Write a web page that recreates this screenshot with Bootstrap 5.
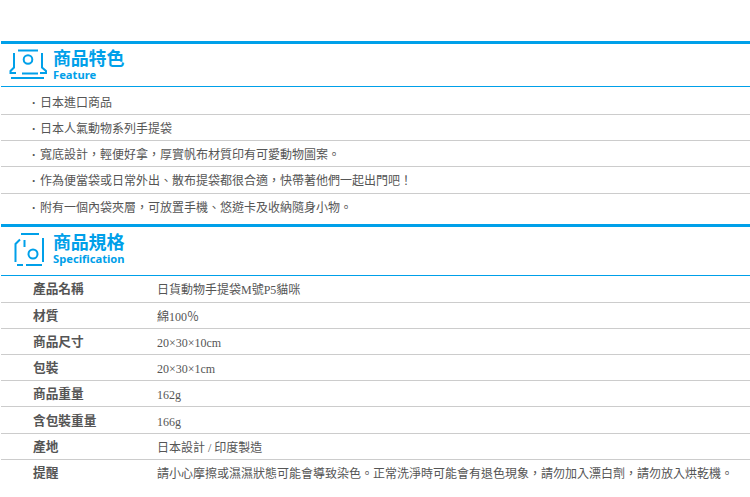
<!DOCTYPE html>
<html lang="zh-Hant">
<head>
<meta charset="utf-8">
<title>商品特色</title>
<link href="https://cdn.jsdelivr.net/npm/bootstrap@5.3.0/dist/css/bootstrap.min.css" rel="stylesheet">
<style>
body{background:#fff;font-family:"Liberation Serif","Noto Sans CJK TC",serif;font-size:12px;color:#555;padding:41px 0 0 1px;overflow:hidden}
.sec-head{border-top:3px solid #00a0e9;border-bottom:1px solid #00a0e9;color:#00a0e9;font-family:"Noto Sans","Noto Sans CJK TC",sans-serif}
.feat-head{height:46px}
.spec-head{height:52px;padding-bottom:4px}
.ico-box{width:52px;flex:none;line-height:0}
.spec-head .ico-box{margin-bottom:-4px}
.ttl{font-size:18px;font-weight:700;line-height:20px;letter-spacing:-.2px}
.ttl-en{font-size:11.2px;font-weight:700;line-height:14px}
.feat-list{height:137px;padding-top:1.5px}
.feat-list .list-group-item{height:26.3px;padding:0 0 0 31px;line-height:25px;color:#555;border-color:#ccc;font-family:"Noto Sans CJK TC",sans-serif;font-size:12px;background:transparent}
.dot-mark{display:inline-block;width:8px;font-family:"Liberation Sans",sans-serif;font-weight:700}
.spec-tbl{table-layout:fixed;margin:0;--bs-table-color:#555;--bs-table-border-color:#ccc;font-size:12px}
.spec-tbl tr{height:26.2px}
.spec-tbl th,.spec-tbl td{padding:0;vertical-align:middle;color:#555}
.spec-tbl td{line-height:22px;padding-top:3px}
.spec-tbl th{width:156px;padding-left:32px;padding-bottom:1px;line-height:24px;font-family:"Noto Sans CJK TC",sans-serif;font-size:12.7px;font-weight:700}
.spec-tbl tr:last-child th,.spec-tbl tr:last-child td{border-bottom:0}
</style>
</head>
<body>
<div class="sec-head feat-head d-flex align-items-center">
  <div class="ico-box">
    <svg width="52" height="42" viewBox="0 44 52 42" fill="none" stroke="#00a0e9" stroke-width="2">
      <path d="M17 50.5H37M13 53V67.5L9.5 71V73H15M41 53V67.5L45 71V73H39M21 73.5H37M10 78H43"/>
      <circle cx="27" cy="59.5" r="4.3"/>
    </svg>
  </div>
  <div>
    <div class="ttl">商品特色</div>
    <div class="ttl-en">Feature</div>
  </div>
</div>
<ul class="list-group list-group-flush feat-list">
  <li class="list-group-item"><span class="dot-mark">·</span>日本進口商品</li>
  <li class="list-group-item"><span class="dot-mark">·</span>日本人氣動物系列手提袋</li>
  <li class="list-group-item"><span class="dot-mark">·</span>寬底設計，輕便好拿，厚實帆布材質印有可愛動物圖案。</li>
  <li class="list-group-item"><span class="dot-mark">·</span>作為便當袋或日常外出、散布提袋都很合適，快帶著他們一起出門吧！</li>
  <li class="list-group-item"><span class="dot-mark">·</span>附有一個內袋夾層，可放置手機、悠遊卡及收納隨身小物。</li>
</ul>
<div class="sec-head spec-head d-flex align-items-center">
  <div class="ico-box">
    <svg width="52" height="48" viewBox="0 227 52 48" fill="none" stroke="#00a0e9" stroke-width="2">
      <path d="M20 234H38M14.5 262V244L19 239.5M23.5 240V247M42 238V262M16 265H22M25 265H41"/>
      <circle cx="32" cy="254" r="4.5"/>
    </svg>
  </div>
  <div>
    <div class="ttl">商品規格</div>
    <div class="ttl-en">Specification</div>
  </div>
</div>
<table class="table spec-tbl">
  <tbody>
    <tr><th>產品名稱</th><td>日貨動物手提袋M號P5貓咪</td></tr>
    <tr><th>材質</th><td>綿100％</td></tr>
    <tr><th>商品尺寸</th><td>20×30×10cm</td></tr>
    <tr><th>包裝</th><td>20×30×1cm</td></tr>
    <tr><th>商品重量</th><td>162g</td></tr>
    <tr><th>含包裝重量</th><td>166g</td></tr>
    <tr><th>產地</th><td>日本設計 / 印度製造</td></tr>
    <tr><th>提醒</th><td>請小心摩擦或濕濕狀態可能會導致染色。正常洗淨時可能會有退色現象，請勿加入漂白劑，請勿放入烘乾機。</td></tr>
  </tbody>
</table>
<script src="https://cdn.jsdelivr.net/npm/bootstrap@5.3.0/dist/js/bootstrap.bundle.min.js"></script>
</body>
</html>
